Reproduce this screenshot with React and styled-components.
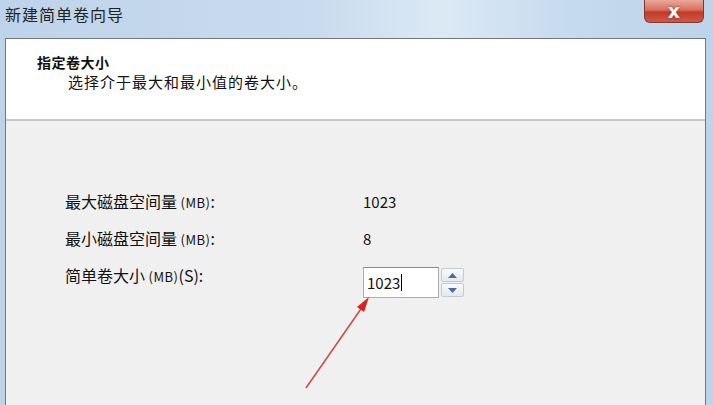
import React from 'react';
import styled, { createGlobalStyle, css } from 'styled-components';

const Global = createGlobalStyle`
  html, body {
    margin: 0;
    padding: 0;
    background: #f0f0f0;
  }
  body {
    font-family: "Noto Sans CJK SC", "Noto Sans", sans-serif;
    color: #111;
  }
`;

const Window = styled.div`
  position: relative;
  width: 713px;
  height: 405px;
  overflow: hidden;
  display: flex;
  flex-direction: column;
  padding: 0 7px 0 5px;
  box-sizing: border-box;
  background: linear-gradient(90deg, #bed3ea 0%, #c9dbee 45%, #dce9f5 62%, #c6daee 80%, #bdd3ea 100%);
`;

const TitleBar = styled.div`
  height: 38px;
  flex: none;
  display: flex;
  justify-content: space-between;
  align-items: flex-start;
`;

const Title = styled.div`
  margin-top: 4px;
  font-size: 16px;
  line-height: 20px;
  color: #222;
  letter-spacing: 1px;
`;

const CloseButton = styled.div`
  width: 60px;
  height: 23px;
  margin-right: 2px;
  box-sizing: border-box;
  border: 1px solid #7a3a30;
  border-top: none;
  border-radius: 0 0 6px 6px;
  background: linear-gradient(180deg, #e9a89a 0%, #d7705f 45%, #c33a26 55%, #d0584a 100%);
  display: flex;
  align-items: center;
  justify-content: center;
  color: #fff;
  font-family: "DejaVu Sans", sans-serif;
  font-weight: bold;
  font-size: 19px;
  line-height: 1;
  text-shadow: 0 0 2px #6a2018;
`;

const Client = styled.div`
  flex: 1;
  display: flex;
  flex-direction: column;
  border: 1px solid #6f7880;
  border-bottom: none;
  background: #f0f0f0;
`;

const Header = styled.div`
  height: 82px;
  flex: none;
  background: #fff;
  border-bottom: 2px solid #c8c8c8;
  padding: 14px 0 0 31px;
  box-sizing: border-box;
`;

const HeaderTitle = styled.div`
  font-size: 14px;
  line-height: 19px;
  font-weight: bold;
  letter-spacing: 0.5px;
`;

const HeaderSub = styled.div`
  margin-left: 31px;
  font-size: 15px;
  line-height: 20px;
  letter-spacing: 1px;
`;

const Body = styled.div`
  display: flex;
  flex-direction: column;
  gap: 12px;
  padding: 68px 0 0 59px;
`;

const Label = styled.div`
  font-size: 16px;
  line-height: 20px;
  white-space: nowrap;
`;

const Spin = styled.div`
  display: flex;
  align-items: center;
  gap: 2px;
`;

const Row = styled.div`
  display: grid;
  grid-template-columns: 298px auto;
  align-items: center;
  height: 25px;

  ${(p) =>
    p.$tall &&
    css`
      align-items: start;
      height: auto;

      ${Label} {
        margin-top: 2px;
      }
      ${Spin} {
        margin-top: 4px;
      }
    `}
`;

const Small = styled.span`
  font-size: 13px;
  letter-spacing: 0.5px;
`;

const Value = styled.div`
  font-size: 15px;
  line-height: 20px;
`;

const Input = styled.div`
  width: 76px;
  height: 31px;
  box-sizing: border-box;
  background: #fff;
  border: 1px solid #abadb3;
  border-top-color: #6e8fb8;
  display: flex;
  align-items: center;
  padding-left: 3px;
  font-size: 15px;
`;

const Caret = styled.span`
  display: inline-block;
  width: 1px;
  height: 17px;
  margin-left: 1px;
  background: #000;
`;

const Buttons = styled.div`
  display: flex;
  flex-direction: column;
  gap: 1px;
`;

const SpinButton = styled.div`
  width: 23px;
  height: 14px;
  box-sizing: border-box;
  border: 1px solid #c2cad6;
  border-radius: 2px;
  background: linear-gradient(180deg, #f8fafc, #e4e9f0);
  display: flex;
  align-items: center;
  justify-content: center;
`;

const Arrow = styled.svg`
  position: absolute;
  left: 0;
  top: 0;
  pointer-events: none;
`;

const Tri = ({ up }) => (
  <svg width="9" height="5" viewBox="0 0 9 5">
    <path d={up ? 'M0 5 L4.5 0 L9 5 Z' : 'M0 0 L4.5 5 L9 0 Z'} fill="#4d6aa0" />
  </svg>
);

export default function App() {
  return (
    <>
      <Global />
      <Window>
        <TitleBar>
          <Title>新建简单卷向导</Title>
          <CloseButton>x</CloseButton>
        </TitleBar>
        <Client>
          <Header>
            <HeaderTitle>指定卷大小</HeaderTitle>
            <HeaderSub>选择介于最大和最小值的卷大小。</HeaderSub>
          </Header>
          <Body>
            <Row>
              <Label>
                最大磁盘空间量 <Small>(MB)</Small>:
              </Label>
              <Value>1023</Value>
            </Row>
            <Row>
              <Label>
                最小磁盘空间量 <Small>(MB)</Small>:
              </Label>
              <Value>8</Value>
            </Row>
            <Row $tall>
              <Label>
                简单卷大小 <Small>(MB)</Small>(S):
              </Label>
              <Spin>
                <Input>
                  1023
                  <Caret />
                </Input>
                <Buttons>
                  <SpinButton>
                    <Tri up />
                  </SpinButton>
                  <SpinButton>
                    <Tri />
                  </SpinButton>
                </Buttons>
              </Spin>
            </Row>
          </Body>
        </Client>
        <Arrow width="713" height="405" viewBox="0 0 713 405">
          <line x1="306" y1="388" x2="363" y2="306" stroke="#c8504c" strokeWidth="1.6" />
          <path d="M369 297 L357 307 L364 312 Z" fill="#e0201c" />
        </Arrow>
      </Window>
    </>
  );
}
